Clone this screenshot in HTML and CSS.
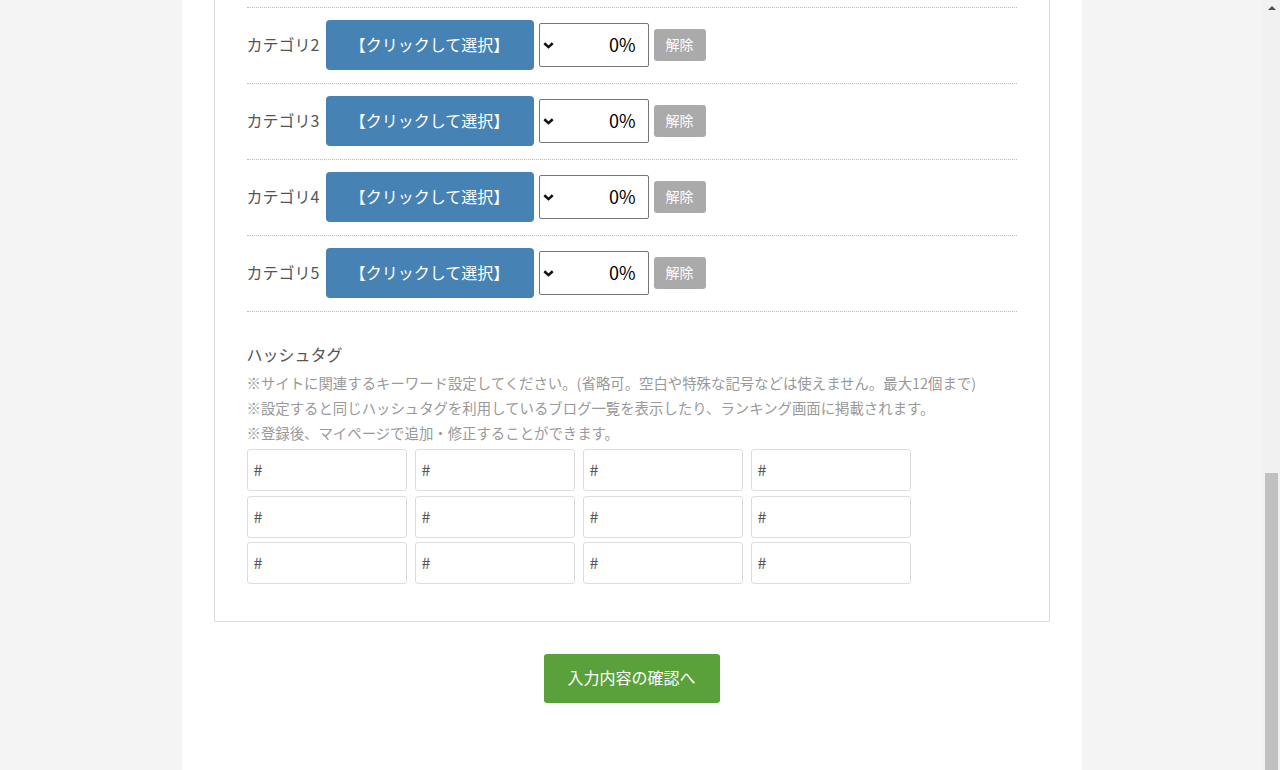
FILE: index.html
```html
<!DOCTYPE html>
<html lang="ja">
<head>
  <meta charset="UTF-8" />
  <meta name="viewport" content="width=device-width, initial-scale=1.0" />
  <title>ブログ登録</title>
  <link rel="stylesheet" href="styles.css">
</head>
<body>
  <div class="screen">
    <main class="main">
      <div class="page">
        <section class="panel">
          <ul class="cat-list">
            <li class="cat-row">
              <span class="cat-label">カテゴリ2</span>
              <button type="button" class="pick">【クリックして選択】</button>
              <span class="ratio">
                <select><option>0%</option></select>
                <svg class="chev" width="11" height="7" viewBox="0 0 11 7"><path d="M1.3 1.3l4.2 3.8 4.2-3.8" fill="none" stroke="#111" stroke-width="2.6"/></svg>
              </span>
              <button type="button" class="clear">解除</button>
            </li>
            <li class="cat-row">
              <span class="cat-label">カテゴリ3</span>
              <button type="button" class="pick">【クリックして選択】</button>
              <span class="ratio">
                <select><option>0%</option></select>
                <svg class="chev" width="11" height="7" viewBox="0 0 11 7"><path d="M1.3 1.3l4.2 3.8 4.2-3.8" fill="none" stroke="#111" stroke-width="2.6"/></svg>
              </span>
              <button type="button" class="clear">解除</button>
            </li>
            <li class="cat-row">
              <span class="cat-label">カテゴリ4</span>
              <button type="button" class="pick">【クリックして選択】</button>
              <span class="ratio">
                <select><option>0%</option></select>
                <svg class="chev" width="11" height="7" viewBox="0 0 11 7"><path d="M1.3 1.3l4.2 3.8 4.2-3.8" fill="none" stroke="#111" stroke-width="2.6"/></svg>
              </span>
              <button type="button" class="clear">解除</button>
            </li>
            <li class="cat-row">
              <span class="cat-label">カテゴリ5</span>
              <button type="button" class="pick">【クリックして選択】</button>
              <span class="ratio">
                <select><option>0%</option></select>
                <svg class="chev" width="11" height="7" viewBox="0 0 11 7"><path d="M1.3 1.3l4.2 3.8 4.2-3.8" fill="none" stroke="#111" stroke-width="2.6"/></svg>
              </span>
              <button type="button" class="clear">解除</button>
            </li>
          </ul>

          <div class="hashtag">
            <h3>ハッシュタグ</h3>
            <p class="note">※サイトに関連するキーワード設定してください。(省略可。空白や特殊な記号などは使えません。最大12個まで)<br>
            ※設定すると同じハッシュタグを利用しているブログ一覧を表示したり、ランキング画面に掲載されます。<br>
            ※登録後、マイページで追加・修正することができます。</p>
            <div class="tag-grid">
              <input type="text" placeholder="#" />
              <input type="text" placeholder="#" />
              <input type="text" placeholder="#" />
              <input type="text" placeholder="#" />
              <input type="text" placeholder="#" />
              <input type="text" placeholder="#" />
              <input type="text" placeholder="#" />
              <input type="text" placeholder="#" />
              <input type="text" placeholder="#" />
              <input type="text" placeholder="#" />
              <input type="text" placeholder="#" />
              <input type="text" placeholder="#" />
            </div>
          </div>
        </section>

        <div class="actions">
          <button type="submit" class="submit">入力内容の確認へ</button>
        </div>
      </div>
    </main>

    <div class="scrollbar">
      <span class="arrow"></span>
      <span class="thumb"></span>
    </div>
  </div>
</body>
</html>
```

FILE: styles.css
```css
html, body {
  height: 100%;
  overflow: hidden;
}
body {
  font-family: "Noto Sans CJK JP", "Noto Sans", sans-serif;
  background: #f4f4f4;
  color: #555;
  margin: 0;
}
.screen {
  display: flex;
  height: 770px;
}
.main {
  flex: 1;
  display: flex;
  justify-content: center;
}
.page {
  width: 900px;
  background: #fff;
}
.panel {
  margin: 0 32px;
  padding: 7px 32px 37px;
  border: 1px solid #ddd;
  border-top: none;
}

/* カテゴリ */
.cat-list {
  list-style: none;
  margin: 0;
  padding: 0;
  border-top: 1px dotted #bbb;
}
.cat-row {
  display: flex;
  align-items: center;
  padding: 12px 0 13px;
  border-bottom: 1px dotted #bbb;
}
.cat-label {
  width: 79px;
  flex-shrink: 0;
  padding-bottom: 3px;
  font-size: 16px;
  line-height: 24px;
  color: #555;
}
.pick {
  width: 208px;
  height: 50px;
  margin-right: 5px;
  padding: 0 0 3px;
  background: #4682b4;
  color: #fff;
  border: none;
  border-radius: 4px;
  font-family: inherit;
  font-size: 16px;
  cursor: pointer;
}
.ratio {
  position: relative;
  display: block;
  margin-right: 5px;
}
.ratio select {
  display: block;
  width: 110px;
  height: 44px;
  padding: 0 12px 2px 24px;
  border: 1px solid #767676;
  border-radius: 2px;
  background: #fff;
  color: #000;
  font-family: inherit;
  font-size: 18px;
  direction: rtl;
  appearance: none;
  -webkit-appearance: none;
}
.chev {
  position: absolute;
  left: 4px;
  top: 19px;
  pointer-events: none;
}
.clear {
  width: 52px;
  height: 32px;
  padding: 0 0 2px;
  background: #aaa;
  color: #fff;
  border: none;
  border-radius: 3px;
  font-family: inherit;
  font-size: 14px;
  cursor: pointer;
}

/* ハッシュタグ */
.hashtag {
  padding-top: 28px;
}
.hashtag h3 {
  margin: 0 0 2px;
  font-size: 16px;
  font-weight: normal;
  line-height: 28px;
  color: #555;
}
.note {
  margin: 0;
  font-size: 14.4px;
  line-height: 25px;
  color: #999;
}
.tag-grid {
  display: grid;
  grid-template-columns: repeat(4, 160px);
  column-gap: 8px;
  row-gap: 4.5px;
  margin-top: 4px;
}
.tag-grid input {
  box-sizing: border-box;
  width: 160px;
  height: 42px;
  margin: 0;
  padding: 0 6px 2px;
  border: 1px solid #ddd;
  border-radius: 3px;
  font-family: inherit;
  font-size: 16px;
  color: #555;
}
.tag-grid input::placeholder {
  color: #555;
}

.actions {
  display: flex;
  justify-content: center;
  padding-top: 32px;
}
.submit {
  width: 176px;
  height: 49px;
  padding: 0 0 3px;
  background: #5ba13b;
  color: #fff;
  border: none;
  border-radius: 3px;
  font-family: inherit;
  font-size: 16px;
  cursor: pointer;
}

/* scrollbar */
.scrollbar {
  width: 17px;
  flex-shrink: 0;
  background: #f1f1f1;
  display: flex;
  flex-direction: column;
  align-items: center;
}
.arrow {
  margin-top: 6px;
  border-left: 4px solid transparent;
  border-right: 4px solid transparent;
  border-bottom: 4px solid #505050;
}
.thumb {
  width: 13px;
  flex: 1;
  margin-top: 463px;
  background: #c1c1c1;
}
```
